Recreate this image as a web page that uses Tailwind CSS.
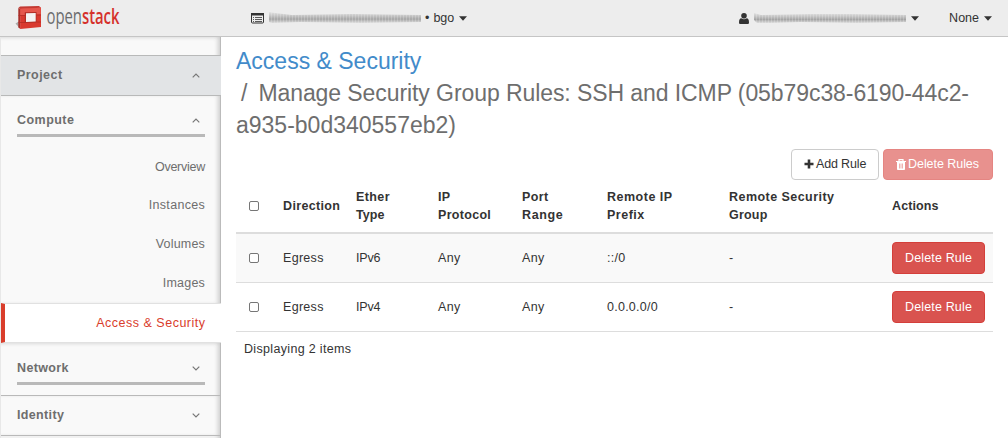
<!DOCTYPE html>
<html lang="en">
<head>
<meta charset="utf-8">
<title>Access &amp; Security - OpenStack Dashboard</title>
<script src="https://cdn.jsdelivr.net/npm/@tailwindcss/browser@4"></script>
</head>
<body class="w-[1008px] h-[438px] overflow-hidden bg-white font-['Liberation_Sans',Arial,sans-serif] text-[12.5px] leading-[18px] text-[#333]">
<header class="flex h-[37px] items-center border-b border-[#c5c5c5] bg-[#ededed] pr-4">
  <svg class="ml-4 h-[36px] w-[110px] shrink-0 overflow-visible" viewBox="16 0 110 36">
    <path d="M15.500 23.500l4-2.500v7z" fill="#aaa"/>
    <path d="M18.300 8l2.200 1v20l-2.200-1.500z" fill="#a8302a"/>
    <path d="M18.300 8l1.700-1.500L39 6l2 1.700-20.500 1.300z" fill="#c23a33"/>
    <path d="M20.200 8.500L41 7.500v19.600L20.200 29z" fill="#d93a30"/>
    <path d="M20.500 8.700l20.200-1v6.500l-20.200 1.300z" fill="#e5574d"/>
    <path d="M18.500 15.500h6.500M36.500 15H41M18.500 22.500h6.500M36.500 22H41" stroke="#b32c25" stroke-width=".8" fill="none"/>
    <path d="M24.800 12.300l11.700-.4v10.500l-11.700.5z" fill="#b02e27"/>
    <path d="M26 13.300l9.700-.3v8.500l-9.700.4z" fill="#f5f3f3"/>
    <text x="46.500" y="24" font-family="Open Sans, sans-serif" font-size="22" fill="#6b6c6e" textLength="73" lengthAdjust="spacingAndGlyphs">open<tspan font-weight="600" fill="#d5312b">stack</tspan></text>
  </svg>
  <div class="ml-[125px] flex items-center">
    <svg class="h-[11px] w-[13px]" viewBox="0 0 13 11"><rect x=".5" y=".5" width="12" height="9.500" rx="1" fill="none" stroke="#333"/><path d="M0 0h13v2.500H0z" fill="#333"/><path d="M2 4.500h1M4 4.500h7M2 6.500h1M4 6.500h7M2 8.500h1M4 8.500h7" stroke="#333" stroke-width=".8"/></svg>
    <svg class="ml-1 h-4 w-[156px]" viewBox="0 0 156 16">
      <defs><linearGradient id="smear" x2="0" y2="1"><stop stop-color="#e2e2e2"/><stop offset=".35" stop-color="#c4c4c4"/><stop offset=".65" stop-color="#a5a5a5"/><stop offset="1" stop-color="#dcdcdc"/></linearGradient>
      <pattern id="grain" width="3" height="16" patternUnits="userSpaceOnUse"><path d="M.5 0v16" stroke="#fff" stroke-opacity=".2"/></pattern></defs>
      <path d="M1 2l6 1 17 2 60-1 69 1v7l-60 1-60-1-29 1-3-1z" fill="url(#smear)"/>
      <path d="M1 2l6 1 17 2 60-1 69 1v7l-60 1-60-1-29 1-3-1z" fill="url(#grain)"/>
    </svg>
    <span class="ml-[1px]">•</span>
    <span class="ml-[4px]">bgo</span>
    <svg class="ml-[5px] h-[5px] w-2" viewBox="0 0 8 5"><path d="M0 .3h8L4 4.800z" fill="#333"/></svg>
  </div>
  <div class="ml-auto flex items-center">
    <svg class="h-[11px] w-[10px]" viewBox="0 0 10 11"><circle cx="5" cy="2.800" r="2.800" fill="#333"/><path d="M0 9.500C0 6.500 1 5.200 2.300 5.200 4 6.500 6 6.500 7.700 5.200 9 5.200 10 6.500 10 9.500c0 1-.6 1.500-1.500 1.500h-7C.6 11 0 10.500 0 9.500z" fill="#333"/></svg>
    <svg class="ml-1 h-4 w-[156px]" viewBox="0 0 156 16"><path d="M1 3l7 2 50-1 40 0 55 1v7l-50 1-55-1-30 1-14 0-3-3z" fill="url(#smear)"/><path d="M1 3l7 2 50-1 40 0 55 1v7l-50 1-55-1-30 1-14 0-3-3z" fill="url(#grain)"/></svg>
    <svg class="ml-[2px] h-[5px] w-2" viewBox="0 0 8 5"><path d="M0 .3h8L4 4.800z" fill="#333"/></svg>
    <span class="ml-[30px]">None</span>
    <svg class="ml-[5px] h-[5px] w-2" viewBox="0 0 8 5"><path d="M0 .3h8L4 4.800z" fill="#333"/></svg>
  </div>
</header>
<div class="flex h-[401px]">
  <nav class="flex w-[221px] shrink-0 flex-col border-l border-[#e8e8e8] text-[#6e6e6e]">
    <div class="h-[18px] border-r border-[#bbb] bg-[#f9f9f9] shadow-[inset_-4px_2px_4px_-2px_#ccc]"></div>
    <div class="flex h-[41px] items-center justify-between border-y border-[#b8b9b9] bg-[#e2e4e6] pr-[21px] pb-px pl-4 font-bold tracking-[.45px]">Project
      <svg class="h-[5px] w-2" viewBox="0 0 8 5"><path d="M.7 4.300L4 1l3.300 3.300" fill="none" stroke="#777" stroke-width="1.200"/></svg></div>
    <div class="h-[207px] border-r border-[#bbb] bg-[#f9f9f9] shadow-[inset_-4px_0_4px_-2px_#ccc]">
      <div class="mr-[15px] ml-4 flex h-[41px] items-center justify-between border-b-3 border-[#b9b9b9] pt-[10px] pr-[5px] font-bold tracking-[.45px]">Compute
        <svg class="h-[5px] w-2" viewBox="0 0 8 5"><path d="M.7 4.300L4 1l3.300 3.300" fill="none" stroke="#777" stroke-width="1.200"/></svg></div>
      <div class="flex flex-col items-end gap-[20.700px] pt-[20.700px] pr-[15px]">
        <span class="tracking-[-.25px]">Overview</span>
        <span class="tracking-[.3px]">Instances</span>
        <span class="tracking-[.2px]">Volumes</span>
        <span class="tracking-[.2px]">Images</span>
      </div>
    </div>
    <div class="flex h-10 items-center justify-end border-t border-b border-l-4 border-t-[#e1e1e1] border-b-[#e1e1e1] border-l-[#d93d2b] bg-white pr-[15.500px] tracking-[.5px] text-[#d93d2b]">Access &amp; Security</div>
    <div class="h-[53px] border-r border-b border-r-[#bbb] border-b-[#b9b9b9] bg-[#f9f9f9] shadow-[inset_-4px_2px_4px_-2px_#ccc]">
      <div class="mr-[15px] ml-4 flex h-[42px] items-center justify-between border-b-3 border-[#b9b9b9] pt-[11px] pr-[5px] font-bold tracking-[.35px]">Network
        <svg class="h-[5px] w-2" viewBox="0 0 8 5"><path d="M.7 .7L4 4 7.300.7" fill="none" stroke="#777" stroke-width="1.200"/></svg></div>
    </div>
    <div class="flex h-10 items-center justify-between border-r border-b border-r-[#bbb] border-b-[#b9b9b9] bg-[#f9f9f9] pr-5 pb-px pl-4 font-bold tracking-[.35px] shadow-[inset_-4px_0_4px_-2px_#ccc]">Identity
      <svg class="h-[5px] w-2" viewBox="0 0 8 5"><path d="M.7 .7L4 4 7.300.7" fill="none" stroke="#777" stroke-width="1.200"/></svg></div>
    <div class="flex-1 border-r border-[#bbb] bg-[#f9f9f9] shadow-[inset_-4px_0_4px_-2px_#ccc]"></div>
  </nav>
  <main class="w-[787px] px-[15px]">
    <h1 class="pt-[8px] text-[23px] leading-8 whitespace-nowrap text-[#6e6e6e]"><a class="text-[#428bca]">Access &amp; Security</a><br><span class="pr-[11px] pl-[5px]">/</span><span class="tracking-[-.08px]">Manage Security Group Rules: SSH and ICMP (05b79c38-6190-44c2-</span><br>a935-b0d340557eb2)</h1>
    <div class="mt-[8px] flex justify-end gap-1">
      <button class="flex h-[31px] w-[88px] items-center rounded-[4px] border border-[#ccc] pb-[1px] pl-3 tracking-[-.15px]"><svg class="mr-[2px] h-[10px] w-[10px]" viewBox="0 0 10 10"><path d="M5 .5v9M.5 5h9" stroke="#333" stroke-width="2.600"/></svg>Add Rule</button>
      <button class="flex h-[31px] w-[110px] items-center rounded-[4px] border border-[#e58582] bg-[#e8918e] pb-[1px] pl-3 tracking-[-.05px] text-white"><svg class="mr-[2px] h-[11px] w-[10px]" viewBox="0 0 10 11"><path d="M3 2V.7h4V2M0 2.500h10" fill="none" stroke="#fff" stroke-width="1.200"/><path d="M1 3h8v7.200c0 .5-.4.800-.8.800H1.800c-.4 0-.8-.3-.8-.8z" fill="#fff"/><path d="M3.500 4.500v5M5 4.500v5M6.500 4.500v5" stroke="#e8918e" stroke-width=".7"/></svg>Delete Rules</button>
    </div>
    <table class="w-[757px] table-fixed text-left">
      <colgroup><col class="w-[39px]"><col class="w-[73px]"><col class="w-[82px]"><col class="w-[84px]"><col class="w-[85px]"><col class="w-[122px]"><col class="w-[163px]"><col class="w-[109px]"></colgroup>
      <thead><tr class="h-[53px] border-b-2 border-[#ddd] [&>th]:px-2 [&>th]:pt-0 [&>th]:pb-px [&>th]:whitespace-nowrap">
        <th><div class="ml-[5px] h-[10px] w-[10px] rounded-[2px] border border-[#767676] bg-white"></div></th>
        <th class="tracking-[.35px]">Direction</th>
        <th><span class="tracking-[.4px]">Ether</span><br><span class="tracking-[.1px]">Type</span></th>
        <th class="tracking-[.3px]">IP<br>Protocol</th>
        <th><span class="tracking-[.4px]">Port</span><br><span class="tracking-[.6px]">Range</span></th>
        <th class="tracking-[.5px]">Remote IP<br>Prefix</th>
        <th><span class="tracking-[.45px]">Remote Security</span><br><span class="tracking-[.2px]">Group</span></th>
        <th class="tracking-[.1px]">Actions</th>
      </tr></thead>
      <tbody class="[&>tr]:h-[49px] [&>tr]:border-b [&>tr]:border-[#ddd] [&>tr>td]:px-2">
        <tr class="bg-[#f9f9f9]"><td><div class="ml-[5px] h-[10px] w-[10px] rounded-[2px] border border-[#767676] bg-white"></div></td><td class="tracking-[.3px]">Egress</td><td class="tracking-[-.2px]">IPv6</td><td class="tracking-[.4px]">Any</td><td class="tracking-[.4px]">Any</td><td class="tracking-[.25px]">::/0</td><td>-</td><td><button class="block h-8 w-[93px] rounded-[4px] border border-[#d43f3a] bg-[#d9534f] tracking-[.15px] text-white">Delete Rule</button></td></tr>
        <tr><td><div class="ml-[5px] h-[10px] w-[10px] rounded-[2px] border border-[#767676] bg-white"></div></td><td class="tracking-[.3px]">Egress</td><td class="tracking-[-.2px]">IPv4</td><td class="tracking-[.4px]">Any</td><td class="tracking-[.4px]">Any</td><td class="tracking-[.25px]">0.0.0.0/0</td><td>-</td><td><button class="block h-8 w-[93px] rounded-[4px] border border-[#d43f3a] bg-[#d9534f] tracking-[.15px] text-white">Delete Rule</button></td></tr>
      </tbody>
    </table>
    <p class="mt-2 pl-2 tracking-[.33px]">Displaying 2 items</p>
  </main>
</div>
</body>
</html>
